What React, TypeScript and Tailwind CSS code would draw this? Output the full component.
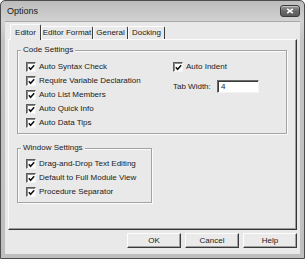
import React from "react";

const Check = () => (
  <span className="w-[10px] h-[10px] shrink-0 bg-white border border-t-[#5a5a5a] border-l-[#5a5a5a] border-b-[#f4f4f4] border-r-[#f4f4f4] shadow-[inset_1px_1px_0_#8a8a8a] flex items-center justify-center">
    <svg width="7" height="7" viewBox="0 0 7 7">
      <path d="M0.8 3.2 L2.6 5.3 L6.2 1.2" stroke="#111" strokeWidth="1.5" fill="none" />
    </svg>
  </span>
);

const Row = ({ label }: { label: string }) => (
  <div className="flex items-center gap-[3px] h-[14px] whitespace-nowrap">
    <Check />
    <span className="leading-[10px]">{label}</span>
  </div>
);

const Group = ({
  title,
  className,
  children,
}: {
  title: string;
  className: string;
  children: React.ReactNode;
}) => (
  <div
    className={
      "relative border border-[#a3a3a3] shadow-[inset_1px_1px_0_#fbfbfb,1px_1px_0_#fbfbfb] " +
      className
    }
  >
    <span className="absolute -top-[6px] left-[3px] px-[2px] bg-[#e9e9e9] leading-[10px] whitespace-nowrap">
      {title}
    </span>
    {children}
  </div>
);

const Tab = ({
  label,
  w,
  active,
}: {
  label: string;
  w: string;
  active?: boolean;
}) => (
  <div
    className={
      "flex items-center justify-center whitespace-nowrap bg-[#e9e9e9] border-t border-l border-t-[#fcfcfc] border-l-[#fcfcfc] border-r border-r-[#3c3c3c] rounded-t-[2px] leading-[10px] " +
      w +
      (active ? " h-[16px] -mb-[1px] relative z-10" : " h-[13px]")
    }
  >
    {label}
  </div>
);

const Btn = ({ label }: { label: string }) => (
  <div className="w-[54px] h-[15px] flex items-center justify-center bg-[#eaeaea] border border-t-[#fdfdfd] border-l-[#fdfdfd] border-b-[#3a3a3a] border-r-[#3a3a3a] shadow-[inset_-1px_-1px_0_#a0a0a0] leading-[10px]">
    {label}
  </div>
);

export default function App() {
  return (
    <div className="w-[305px] h-[259px] font-['Liberation_Sans',Arial,sans-serif] text-[8px] text-[#1a1a1a] bg-[linear-gradient(#bcbcbc,#d2d2d2_20px,#c4c4c4_40px,#bfbfbf)] border border-[#4c4c4c] rounded-t-[5px] flex flex-col">
      <div className="h-[20px] shrink-0 flex items-center justify-between pl-[6px] pr-[4px]">
        <span className="text-[9px] leading-[10px] text-[#202020]">Options</span>
        <div className="w-[20px] h-[12px] rounded-[3px] border border-[#3a3a3a] bg-[linear-gradient(#9a9a9a,#6a6a6a_50%,#5a5a5a)] flex items-center justify-center shadow-[inset_0_1px_0_#c0c0c0]">
          <svg width="8" height="6" viewBox="0 0 8 6">
            <path d="M1.2 0.8 L6.8 5.2 M6.8 0.8 L1.2 5.2" stroke="#fff" strokeWidth="1.6" />
          </svg>
        </div>
      </div>
      <div className="flex-1 mx-[4px] mb-[4px] bg-[#e9e9e9] flex flex-col px-[3px] pt-[2px] border-t border-[#a8a8a8]">
        <div className="h-[15px] flex items-end pl-[2px]">
          <Tab label="Editor" w="w-[31px]" active />
          <Tab label="Editor Format" w="w-[52px]" />
          <Tab label="General" w="w-[35px]" />
          <Tab label="Docking" w="w-[37px]" />
        </div>
        <div className="h-[191px] bg-[#e9e9e9] border border-t-[#fcfcfc] border-l-[#fcfcfc] border-b-[#333] border-r-[#333] shadow-[inset_-1px_-1px_0_#9c9c9c] flex flex-col pt-[10px] pl-[8px] pr-[9px]">
          <Group title="Code Settings" className="h-[84px] flex pt-[9px] pl-[8px]">
            <div className="flex flex-col w-[147px]">
              <Row label="Auto Syntax Check" />
              <Row label="Require Variable Declaration" />
              <Row label="Auto List Members" />
              <Row label="Auto Quick Info" />
              <Row label="Auto Data Tips" />
            </div>
            <div className="flex flex-col">
              <Row label="Auto Indent" />
              <div className="flex items-center mt-[6px]">
                <span className="w-[44px] leading-[10px] whitespace-nowrap">Tab Width:</span>
                <div className="w-[42px] h-[13px] bg-white border border-t-[#6a6a6a] border-l-[#6a6a6a] border-b-[#f4f4f4] border-r-[#f4f4f4] shadow-[inset_1px_1px_0_#3a3a3a] flex items-center pl-[3px] leading-[10px]">
                  4
                </div>
              </div>
            </div>
          </Group>
          <Group title="Window Settings" className="mt-[14px] w-[135px] h-[55px] flex flex-col pt-[8px] pl-[8px]">
            <Row label="Drag-and-Drop Text Editing" />
            <Row label="Default to Full Module View" />
            <Row label="Procedure Separator" />
          </Group>
        </div>
        <div className="mt-[3px] flex justify-end gap-[4px]">
          <Btn label="OK" />
          <Btn label="Cancel" />
          <Btn label="Help" />
        </div>
      </div>
    </div>
  );
}
